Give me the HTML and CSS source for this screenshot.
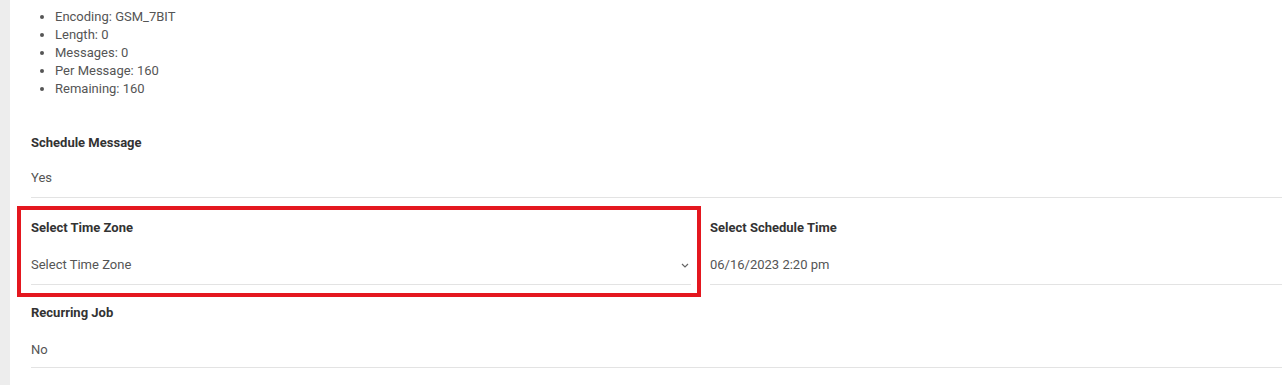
FILE: index.html
```html
<!DOCTYPE html>
<html lang="en">
<head>
  <meta charset="UTF-8" />
  <meta name="viewport" content="width=device-width, initial-scale=1.0" />
  <title>Schedule Message</title>
  <link rel="stylesheet" href="styles.css">
</head>
<body>
  <div class="page">
    <ul class="sms-info">
      <li>Encoding: GSM_7BIT</li>
      <li>Length: 0</li>
      <li>Messages: 0</li>
      <li>Per Message: 160</li>
      <li>Remaining: 160</li>
    </ul>

    <div class="field field-first">
      <div class="label">Schedule Message</div>
      <div class="value">Yes</div>
    </div>

    <div class="row">
      <div class="col col-zone">
        <div class="label">Select Time Zone</div>
        <div class="value select">
          <span>Select Time Zone</span>
          <svg class="chevron" width="8" height="5" viewBox="0 0 8 5">
            <path d="M1 1 L4 4 L7 1" fill="none" stroke="#666" stroke-width="1.2" />
          </svg>
        </div>
      </div>
      <div class="col col-time">
        <div class="label">Select Schedule Time</div>
        <div class="value">06/16/2023 2:20 pm</div>
      </div>
    </div>

    <div class="field field-last">
      <div class="label">Recurring Job</div>
      <div class="value">No</div>
    </div>
  </div>
</body>
</html>
```

FILE: styles.css
```css
html, body {
  margin: 0;
  padding: 0;
  background: white;
}

body {
  font-family: Roboto, "Liberation Sans", sans-serif;
  font-size: 13px;
  color: #555;
}

.page {
  border-left: 10px solid #ededed;
  padding-left: 21px;
  min-height: 385px;
  box-sizing: border-box;
}

.sms-info {
  margin: 0 0 16px;
  padding: 8px 0 0 24px;
  line-height: 18px;
  color: #555;
}

.field { padding-top: 20px; }

.label {
  font-weight: 700;
  color: #333;
  line-height: 18px;
  margin-bottom: 19px;
}

.field-first .label { margin-bottom: 17px; }

.value {
  line-height: 18px;
  padding-bottom: 10px;
  border-bottom: 1px solid #e3e3e3;
}

.row {
  display: flex;
  align-items: flex-start;
  gap: 9px;
  margin-top: 8px;
}

.col-zone {
  flex: 0 0 684px;
  box-sizing: border-box;
  margin-left: -14px;
  border: 4px solid #e4171f;
  padding: 9px 6px 8px 10px;
}

.col-time {
  flex: 1;
  padding-top: 13px;
}

.select {
  display: flex;
  justify-content: space-between;
  align-items: center;
}

.chevron {
  margin-right: 2px;
}

.field-last { padding-top: 7px; }
.field-last .value { padding-bottom: 8px; }
```
